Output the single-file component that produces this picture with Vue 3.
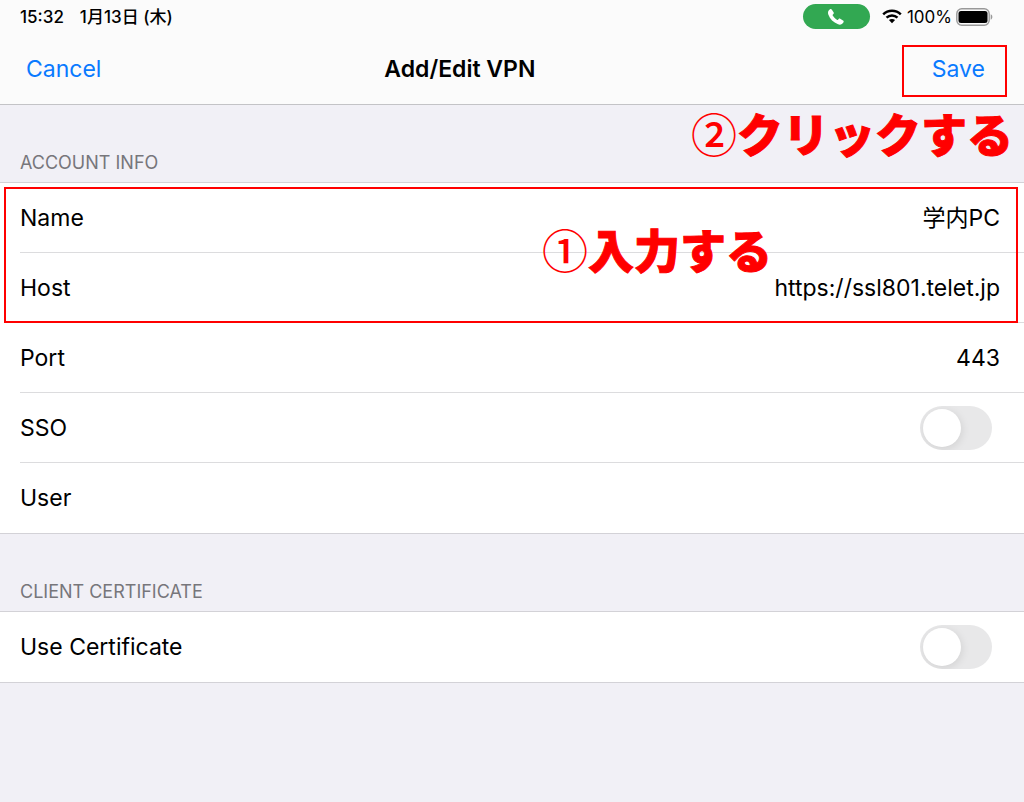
<script setup>
import { reactive } from 'vue'

const form = reactive({
  name: '学内PC',
  host: 'https://ssl801.telet.jp',
  port: '443',
  sso: false,
  user: '',
  certificate: false,
})
</script>

<template>
  <div class="screen">
    <header class="top">
      <div class="status">
        <span class="time">15:32</span>
        <span class="date">1月13日 (木)</span>
        <span class="call" role="img" aria-label="Call in progress">
          <svg width="18" height="18" viewBox="0 0 18 18">
            <path d="M3 1.300C3.700.8 4.500 1 4.900 1.700L6.700 4.600C7 5.200 6.900 5.700 6.400 6.100L5.700 6.700C5.500 6.900 5.500 7.200 5.700 7.500C6.900 9.400 8.300 10.800 10.200 11.900C10.500 12.100 10.800 12.100 11 11.800L11.700 11C12.100 10.500 12.700 10.500 13.200 10.800L16 12.500C16.700 12.900 16.900 13.600 16.500 14.300C15.300 16.300 13.300 17.200 11.100 16.300C6.300 14.400 3 11.100 1.300 6.500C.5 4.400 1.200 2.500 3 1.300Z" fill="#fff" />
          </svg>
        </span>
        <svg class="wifi" width="20" height="15" viewBox="0 0 20 15" role="img" aria-label="Wi-Fi">
          <g fill="none" stroke="#000" stroke-width="2.500">
            <path d="M1.200 5.300C6.100.6 13.900.6 18.800 5.300" />
            <path d="M4.500 8.700C7.600 5.800 12.400 5.800 15.500 8.700" />
          </g>
          <path d="M6.900 11.100C8.700 9.500 11.300 9.500 13.100 11.100L10 14.300Z" />
        </svg>
        <span class="percent">100%</span>
        <svg class="battery" width="37" height="18" viewBox="0 0 37 18" role="img" aria-label="Battery full">
          <rect x="0.800" y="0.800" width="32.400" height="16.400" rx="5" fill="none" stroke="#999" stroke-width="1.400" />
          <rect x="2.500" y="3" width="29" height="12" rx="2.500" />
          <path d="M34.700 6.300C36.900 7 36.900 11 34.700 11.700Z" fill="#999" />
        </svg>
      </div>
      <nav class="bar">
        <button type="button" class="action">Cancel</button>
        <h1 class="title">Add/Edit VPN</h1>
        <div class="save">
          <button type="button" class="action">Save</button>
          <p class="note note-save"><span class="step">②</span>クリックする</p>
        </div>
      </nav>
    </header>

    <main>
      <h2 class="caption">ACCOUNT INFO</h2>
      <section class="group">
        <div class="marked">
          <label class="row">
            <span>Name</span>
            <input v-model="form.name" class="field" type="text" />
          </label>
          <label class="row">
            <span>Host</span>
            <input v-model="form.host" class="field" type="text" />
          </label>
          <p class="note note-input"><span class="step">①</span>入力する</p>
        </div>
        <label class="row">
          <span>Port</span>
          <input v-model="form.port" class="field" type="text" inputmode="numeric" />
        </label>
        <label class="row">
          <span>SSO</span>
          <input v-model="form.sso" class="switch" type="checkbox" role="switch" />
        </label>
        <label class="row">
          <span>User</span>
          <input v-model="form.user" class="field" type="text" />
        </label>
      </section>

      <h2 class="caption">CLIENT CERTIFICATE</h2>
      <section class="group">
        <label class="row">
          <span>Use Certificate</span>
          <input v-model="form.certificate" class="switch" type="checkbox" role="switch" />
        </label>
      </section>
    </main>
  </div>
</template>

<style>
body {
  margin: 0;
  background: #f1f0f6;
}
</style>

<style scoped>
.screen {
  min-height: 100vh;
  background: #f1f0f6;
  color: #000;
  font-family: Inter, "Noto Sans CJK JP", sans-serif;
  font-size: 23px;
  line-height: 28px;
}

.top {
  background: #fbfbfb;
  border-bottom: 1px solid #c3c3c6;
}

.status {
  display: flex;
  align-items: center;
  height: 33px;
  padding: 0 31px 0 20px;
  font-size: 17px;
  line-height: 20px;
  font-weight: 500;
}

.date {
  margin-left: 16px;
}

.call {
  display: flex;
  align-items: center;
  justify-content: center;
  width: 67px;
  height: 25px;
  margin: 0 12px 0 auto;
  border-radius: 13px;
  background: #32a852;
}

.wifi {
  margin-right: 5px;
}

.percent {
  font-weight: 400;
}

.battery {
  margin-left: 4px;
}

.bar {
  display: grid;
  grid-template-columns: 1fr auto 1fr auto;
  align-items: center;
  height: 71px;
  padding: 0 17px 0 26px;
}

.action {
  justify-self: start;
  padding: 0;
  border: 0;
  background: none;
  color: #0a7aff;
  font: inherit;
  cursor: pointer;
}

.title {
  margin: 0;
  font-size: 23px;
  font-weight: 600;
}

.save {
  position: relative;
  grid-column: 4;
  display: flex;
  margin: 4px 0 0 8px;
  padding: 8px 20px 12px 28px;
  border: 2px solid #f00;
}

.note {
  position: absolute;
  margin: 0;
  color: #f00;
  font-family: "Noto Sans CJK JP", sans-serif;
  font-size: 46px;
  font-weight: 900;
  line-height: 56px;
  white-space: nowrap;
  -webkit-text-stroke: 1px #f00;
  pointer-events: none;
}

.step {
  font-weight: 500;
  -webkit-text-stroke: 0;
}

.note-save {
  top: 57px;
  right: -8px;
}

.caption {
  margin: 0;
  padding: 44px 20px 6px;
  color: #77767b;
  font-size: 18px;
  font-weight: 400;
  line-height: 27px;
}

.group {
  border-top: 1px solid #d3d2d7;
  border-bottom: 1px solid #d3d2d7;
  background: #fff;
}

.row {
  display: flex;
  align-items: center;
  justify-content: space-between;
  height: 69px;
  margin-left: 20px;
  padding-right: 24px;
  border-bottom: 1px solid #dcdcde;
}

.group > .row:last-child {
  height: 70px;
  border-bottom: 0;
}

.field {
  flex: 1;
  min-width: 0;
  padding: 0;
  border: 0;
  outline: 0;
  background: none;
  color: inherit;
  font: inherit;
  text-align: right;
}

.switch {
  appearance: none;
  display: flex;
  width: 72px;
  height: 44px;
  margin: 0 8px 0 0;
  padding: 3px;
  box-sizing: border-box;
  border-radius: 22px;
  background: #e8e8e9;
  overflow: hidden;
}

.switch::before {
  content: "";
  width: 38px;
  height: 38px;
  border-radius: 50%;
  background: #fff;
  box-shadow: 1px 2px 8px rgba(0, 0, 0, 0.1);
}

.switch:checked {
  justify-content: flex-end;
  background: #34c759;
}

.marked {
  position: relative;
}

.marked::after {
  content: "";
  position: absolute;
  inset: 4px 6px 0 4px;
  border: 2px solid #f00;
  pointer-events: none;
}

.note-input {
  top: 37px;
  right: 252px;
}
</style>
